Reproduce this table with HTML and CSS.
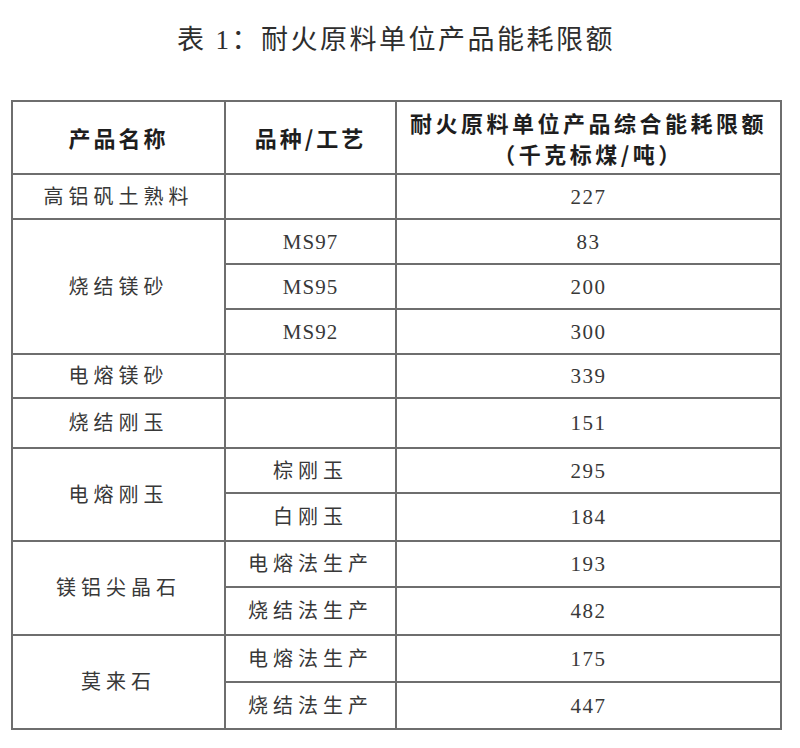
FILE: index.html
```html
<!DOCTYPE html>
<html lang="zh-CN">
<head>
<meta charset="utf-8">
<title>表 1：耐火原料单位产品能耗限额</title>
<link rel="stylesheet" href="styles.css">
</head>
<body>
<div class="page">
  <h1 class="title">表 1：耐火原料单位产品能耗限额</h1>
  <table class="limits">
    <colgroup>
      <col class="c-name">
      <col class="c-kind">
      <col class="c-val">
    </colgroup>
    <thead>
      <tr class="head">
        <th>产品名称</th>
        <th>品种/工艺</th>
        <th><span class="hl">耐火原料单位产品综合能耗限额</span><span class="hl">（千克标煤/吨）</span></th>
      </tr>
    </thead>
    <tbody>
      <tr class="r1"><td class="cn">高铝矾土熟料</td><td></td><td class="num">227</td></tr>
      <tr class="r2"><td class="cn" rowspan="3">烧结镁砂</td><td class="lat">MS97</td><td class="num">83</td></tr>
      <tr class="r3"><td class="lat">MS95</td><td class="num">200</td></tr>
      <tr class="r4"><td class="lat">MS92</td><td class="num">300</td></tr>
      <tr class="r5"><td class="cn">电熔镁砂</td><td></td><td class="num">339</td></tr>
      <tr class="r6"><td class="cn">烧结刚玉</td><td></td><td class="num">151</td></tr>
      <tr class="r7"><td class="cn" rowspan="2">电熔刚玉</td><td class="cn">棕刚玉</td><td class="num">295</td></tr>
      <tr class="r8"><td class="cn">白刚玉</td><td class="num">184</td></tr>
      <tr class="r9"><td class="cn" rowspan="2">镁铝尖晶石</td><td class="cn">电熔法生产</td><td class="num">193</td></tr>
      <tr class="r10"><td class="cn">烧结法生产</td><td class="num">482</td></tr>
      <tr class="r11"><td class="cn" rowspan="2">莫来石</td><td class="cn">电熔法生产</td><td class="num">175</td></tr>
      <tr class="r12"><td class="cn">烧结法生产</td><td class="num">447</td></tr>
    </tbody>
  </table>
</div>
</body>
</html>
```

FILE: styles.css
```css
html, body {
  margin: 0;
  padding: 0;
  background: #ffffff;
}

.page {
  width: 800px;
  height: 748px;
  overflow: hidden;
  font-family: "Liberation Serif", "Noto Sans CJK SC", serif;
  color: #383838;
}

.title {
  margin: 0;
  padding: 22px 8px 0 0;
  height: 78px;
  line-height: 36px;
  font-size: 27px;
  font-weight: 400;
  letter-spacing: 2.5px;
  text-align: center;
  color: #2e2e2e;
}

.limits {
  margin-left: 11px;
  width: 771px;
  border-collapse: collapse;
  table-layout: fixed;
}

.c-name { width: 213px; }
.c-kind { width: 171px; }
.c-val { width: 385px; }

.limits th,
.limits td {
  border: 2px solid #6e6e6e;
  padding: 0;
  text-align: center;
  vertical-align: middle;
  white-space: nowrap;
}

.limits th {
  font-family: "Noto Sans CJK SC", sans-serif;
  font-weight: 700;
  font-size: 22px;
  letter-spacing: 3px;
  line-height: 31px;
  color: #1e1e1e;
}

.limits th .hl {
  display: block;
  letter-spacing: 3.5px;
}

.cn {
  font-size: 20px;
  letter-spacing: 5px;
  line-height: 24px;
}

.lat {
  font-size: 21px;
  letter-spacing: 1px;
  line-height: 24px;
}

.num {
  font-size: 21px;
  letter-spacing: 1.5px;
  line-height: 24px;
}

.head { height: 73px; }
.r1 { height: 45px; }
.r2 { height: 45px; }
.r3 { height: 45px; }
.r4 { height: 45px; }
.r5 { height: 44px; }
.r6 { height: 50px; }
.r7 { height: 45px; }
.r8 { height: 48px; }
.r9 { height: 46px; }
.r10 { height: 48px; }
.r11 { height: 47px; }
.r12 { height: 47px; }
```
